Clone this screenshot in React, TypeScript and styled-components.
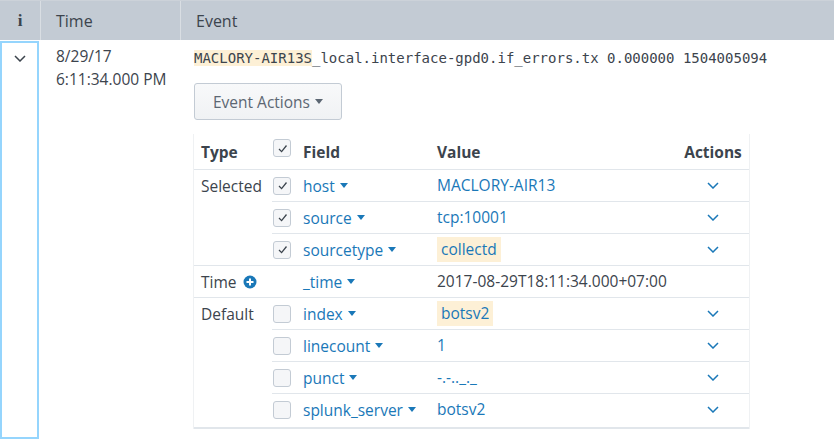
import React from 'react';
import styled, { createGlobalStyle } from 'styled-components';

const Global = createGlobalStyle`
  html, body { margin: 0; padding: 0; background: #fff; }
  body {
    width: 834px; height: 441px; overflow: hidden;
    font-family: "Open Sans", "Liberation Sans", sans-serif;
    color: #3c444d;
  }
`;

const Page = styled.div`
  width: 834px;
  height: 441px;
  overflow: hidden;
  display: flex;
  flex-direction: column;
`;

const HeaderBar = styled.div`
  display: grid;
  grid-template-columns: 40px 140px 1fr;
  height: 40px;
  flex: none;
  background: #c3cbd4;
  border-top: 1px solid #ccd2d9;
  box-sizing: border-box;
`;

const HeadCell = styled.div<{ $first?: boolean }>`
  display: flex;
  align-items: center;
  justify-content: ${p => (p.$first ? 'center' : 'flex-start')};
  padding-left: ${p => (p.$first ? 0 : 15)}px;
  border-left: ${p => (p.$first ? 'none' : '1px solid #d9dee3')};
  font-size: 16px;
  color: #3c444d;
`;

const InfoGlyph = styled.span`
  font-family: "Liberation Serif", "DejaVu Serif", serif;
  font-weight: bold;
  font-size: 17px;
  color: #3c444d;
`;

const EventRow = styled.div`
  display: grid;
  grid-template-columns: 40px 140px 1fr;
  flex: 1;
  padding-top: 1px;
`;

const ExpandCell = styled.div`
  width: 39px;
  height: 398px;
  box-sizing: border-box;
  border: 2px solid #95d5fd;
  display: flex;
  justify-content: center;
  padding-top: 12px;
`;

const TimeCell = styled.div`
  padding: 4px 0 0 16px;
  font-size: 15.5px;
  line-height: 23px;
  color: #3c444d;
`;

const EventCell = styled.div`
  padding: 8px 0 0 14px;
  display: flex;
  flex-direction: column;
  align-items: flex-start;
`;

const RawLine = styled.div`
  font-family: "DejaVu Sans Mono", "Liberation Mono", monospace;
  font-size: 14px;
  line-height: 18px;
  color: #3c444d;
  white-space: pre;
`;

const RawHit = styled.span`
  background: #fdf0d6;
`;

const ActionButton = styled.button`
  margin-top: 16px;
  width: 148px;
  height: 37px;
  box-sizing: border-box;
  border: 1px solid #c3cbd4;
  border-radius: 3px;
  background: linear-gradient(#f8f9fa, #f0f2f4);
  color: #5c6773;
  font-family: "Open Sans", "Liberation Sans", sans-serif;
  font-size: 15.5px;
  display: flex;
  align-items: center;
  justify-content: center;
  gap: 5px;
  padding: 0;
`;

const FieldTable = styled.div`
  margin-top: 14px;
  width: 555px;
  background: #fff;
  box-shadow: -1px 0 0 #eff1f3, 1px 0 0 #eff1f3;
  border-bottom: 2px solid #e1e6eb;
  padding-bottom: 2px;
`;

const Grid = styled.div<{ $head?: boolean }>`
  display: grid;
  grid-template-columns: 78px 31px 134px 240px 72px;
  height: ${p => (p.$head ? 35 : 32)}px;
`;

const TypeCell = styled.div<{ $line?: boolean; $head?: boolean }>`
  display: flex;
  align-items: center;
  gap: 6px;
  padding-left: 7px;
  box-sizing: border-box;
  border-top: ${p => (p.$line ? '1px solid #e1e6eb' : 'none')};
  font-size: 15.5px;
  font-weight: ${p => (p.$head ? 700 : 400)};
  color: #3c444d;
  white-space: nowrap;
`;

const Cell = styled.div<{ $head?: boolean; $center?: boolean; $top?: boolean }>`
  display: flex;
  align-items: ${p => (p.$top ? 'flex-start' : 'center')};
  justify-content: ${p => (p.$center ? 'center' : 'flex-start')};
  box-sizing: border-box;
  border-top: ${p => (p.$head ? 'none' : '1px solid #e1e6eb')};
  padding-top: ${p => (p.$top ? 5 : 0)}px;
  font-size: 15.5px;
  font-weight: ${p => (p.$head ? 700 : 400)};
  color: #3c444d;
  white-space: nowrap;
`;

const ChkCell = styled(Cell)`
  padding-left: 1px;
`;

const FieldLink = styled.span`
  color: #1a78b8;
  display: inline-flex;
  align-items: center;
  gap: 5px;
`;

const Value = styled.span<{ $link?: boolean; $hit?: boolean }>`
  color: ${p => (p.$link ? '#1a78b8' : '#3c444d')};
  background: ${p => (p.$hit ? '#fdf0d6' : 'transparent')};
  padding: ${p => (p.$hit ? '3px 4px' : '0')};
  line-height: 19px;
`;

const Box = styled.span`
  width: 18px;
  height: 18px;
  box-sizing: border-box;
  border: 1px solid #c3cbd4;
  border-radius: 3px;
  background: #f5f6f8;
  display: inline-flex;
  align-items: center;
  justify-content: center;
`;

const Caret = ({ color = '#1a78b8' }: { color?: string }) => (
  <svg width="8" height="5" viewBox="0 0 8 5"><path d="M0 0h8L4 5z" fill={color} /></svg>
);

const Check = () => (
  <svg width="13" height="13" viewBox="0 0 13 13">
    <path d="M3 7l2.6 2.6L10.5 3.5" fill="none" stroke="#3c444d" strokeWidth="1.3" />
  </svg>
);

const Chevron = ({ color, w = 12 }: { color: string; w?: number }) => (
  <svg width={w} height="7" viewBox="0 0 12 7">
    <path d="M1 1l5 5 5-5" fill="none" stroke={color} strokeWidth="1.5" />
  </svg>
);

const PlusCircle = () => (
  <svg width="14" height="14" viewBox="0 0 14 14">
    <circle cx="7" cy="7" r="6.5" fill="#1a78b8" />
    <path d="M7 3.5v7M3.5 7h7" stroke="#fff" strokeWidth="2" />
  </svg>
);

type Row = {
  type?: string;
  groupStart?: boolean;
  checkbox?: 'on' | 'off' | null;
  field: string;
  value: string;
  link?: boolean;
  hit?: boolean;
  action?: boolean;
  plus?: boolean;
};

const rows: Row[] = [
  { type: 'Selected', groupStart: true, checkbox: 'on', field: 'host', value: 'MACLORY-AIR13', link: true, action: true },
  { checkbox: 'on', field: 'source', value: 'tcp:10001', link: true, action: true },
  { checkbox: 'on', field: 'sourcetype', value: 'collectd', link: true, hit: true, action: true },
  { type: 'Time', groupStart: true, plus: true, checkbox: null, field: '_time', value: '2017-08-29T18:11:34.000+07:00' },
  { type: 'Default', groupStart: true, checkbox: 'off', field: 'index', value: 'botsv2', link: true, hit: true, action: true },
  { checkbox: 'off', field: 'linecount', value: '1', link: true, action: true },
  { checkbox: 'off', field: 'punct', value: '-.-.._._', link: true, action: true },
  { checkbox: 'off', field: 'splunk_server', value: 'botsv2', link: true, action: true },
];

export default function App() {
  return (
    <Page>
      <Global />
      <HeaderBar>
        <HeadCell $first><InfoGlyph>i</InfoGlyph></HeadCell>
        <HeadCell>Time</HeadCell>
        <HeadCell>Event</HeadCell>
      </HeaderBar>
      <EventRow>
        <ExpandCell>
          <Chevron color="#3c444d" />
        </ExpandCell>
        <TimeCell>
          <div>8/29/17</div>
          <div>6:11:34.000 PM</div>
        </TimeCell>
        <EventCell>
          <RawLine>
            <RawHit>MACLORY-AIR13S</RawHit>_local.interface-gpd0.if_errors.tx 0.000000 1504005094
          </RawLine>
          <ActionButton>
            Event Actions <Caret color="#5c6773" />
          </ActionButton>
          <FieldTable>
            <Grid $head>
              <TypeCell $head>Type</TypeCell>
              <ChkCell $head $top><Box><Check /></Box></ChkCell>
              <Cell $head>Field</Cell>
              <Cell $head>Value</Cell>
              <Cell $head $center>Actions</Cell>
            </Grid>
            {rows.map((r, i) => (
              <Grid key={i}>
                <TypeCell $line={r.groupStart}>
                  {r.type}
                  {r.plus && <PlusCircle />}
                </TypeCell>
                <ChkCell>
                  {r.checkbox && <Box>{r.checkbox === 'on' && <Check />}</Box>}
                </ChkCell>
                <Cell>
                  <FieldLink>{r.field}<Caret /></FieldLink>
                </Cell>
                <Cell>
                  <Value $link={r.link} $hit={r.hit}>{r.value}</Value>
                </Cell>
                <Cell $center>{r.action && <Chevron color="#1a78b8" />}</Cell>
              </Grid>
            ))}
          </FieldTable>
        </EventCell>
      </EventRow>
    </Page>
  );
}
